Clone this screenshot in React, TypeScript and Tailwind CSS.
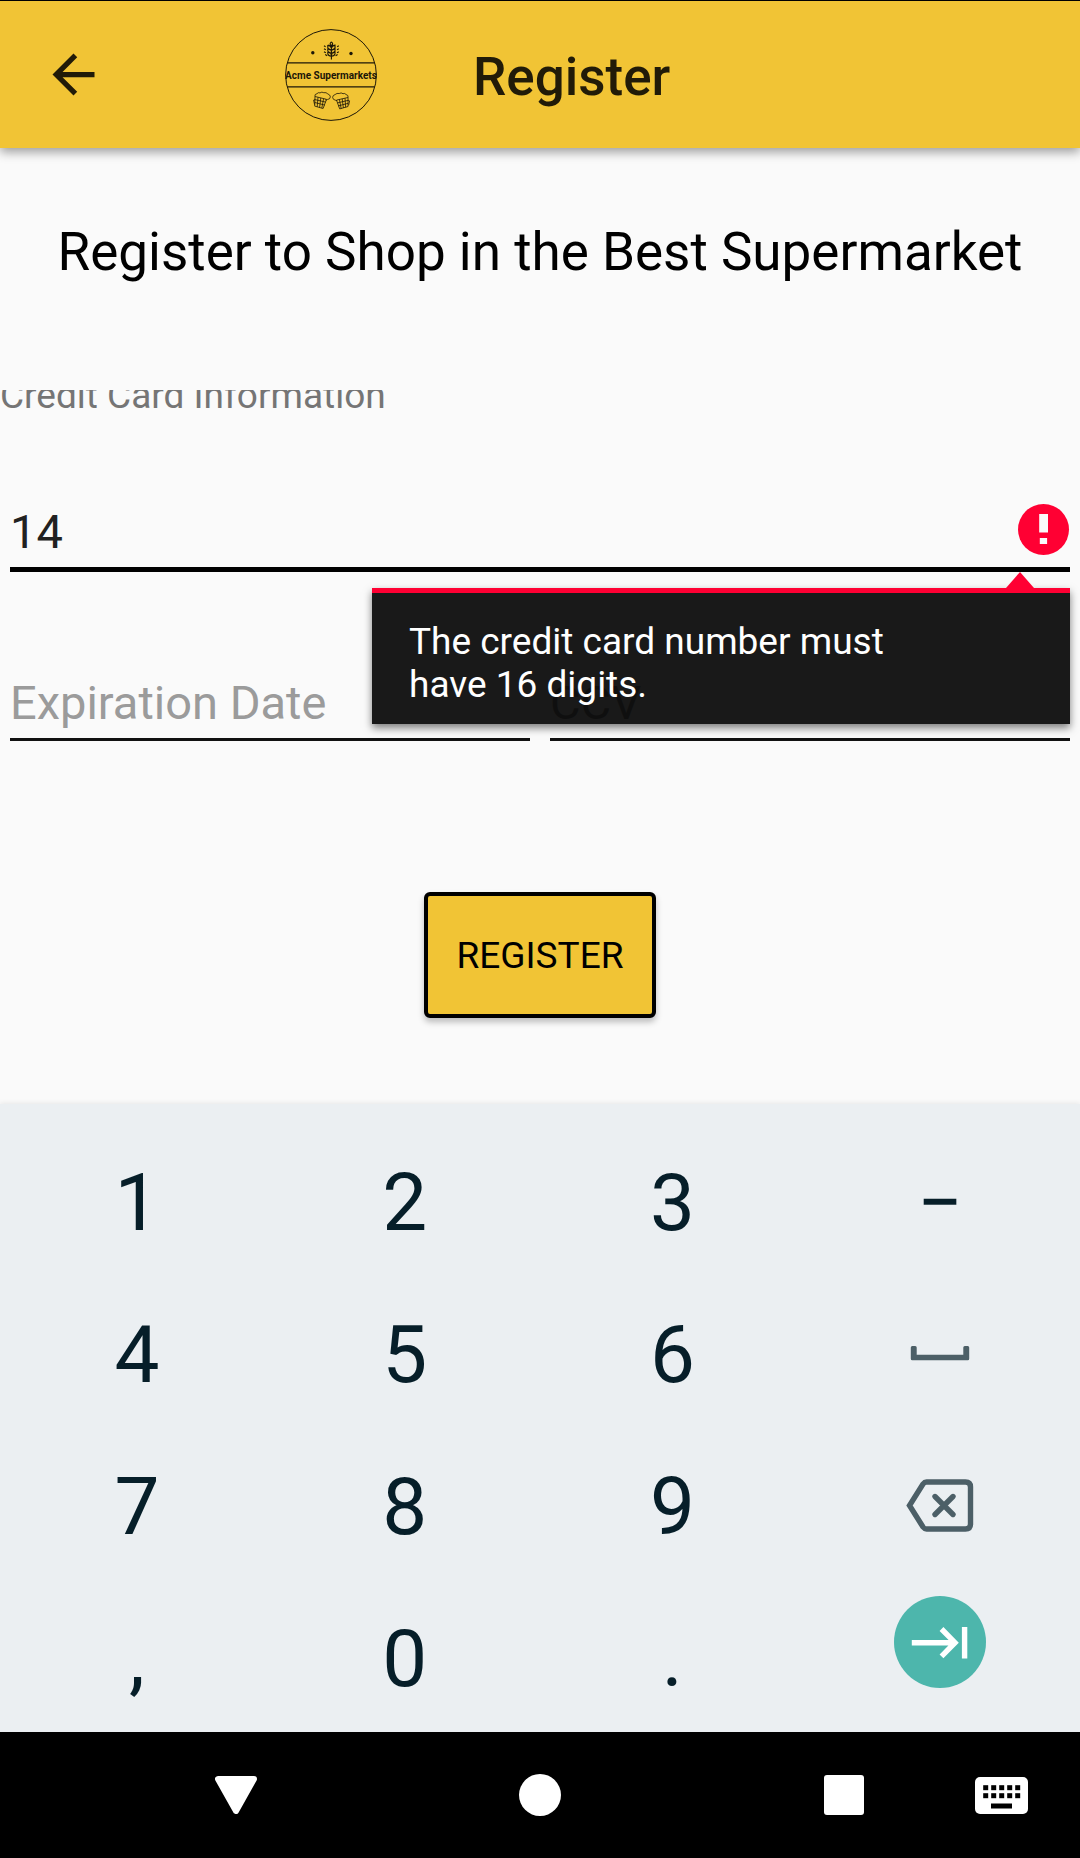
import { useState } from "react";
import type { ReactNode } from "react";
import { MdArrowBack } from "react-icons/md";

function AcmeLogo() {
  return (
    <svg
      className="h-[92px] w-[92px] shrink-0"
      viewBox="10 8.5 92 92"
      role="img"
      aria-label="Acme Supermarkets"
      fill="none"
      stroke="#1c1708"
    >
      <circle cx="56" cy="54.5" r="45.4" strokeWidth="1" />
      <path d="M12.5 42.3h87M12.5 66.4h87" strokeWidth="1.2" />
      <circle cx="37.8" cy="32.3" r="1.7" fill="#1c1708" stroke="none" />
      <circle cx="76" cy="33" r="1.7" fill="#1c1708" stroke="none" />
      {/* wheat ear with two smaller ears beside it */}
      <path
        d="M56.4 24v15M56.4 21.3q-2.6 2.2 0 4.4q2.6-2.2 0-4.4M52.8 24.6v2.6q.4 2 3.6 2.4q3.2-.4 3.6-2.4v-2.6q-3.2.6-3.6 3q-.4-2.4-3.6-3M52.8 28v2.4q.4 2 3.6 2.4q3.2-.4 3.6-2.4V28q-3.2.6-3.6 3q-.4-2.4-3.6-3M52.8 31.4v2q.4 2 3.6 2.4q3.2-.4 3.6-2.4v-2q-3.2.6-3.6 3q-.4-2.4-3.6-3"
        strokeWidth="1.1"
      />
      <path
        d="M49 25.2l1.6 1M49 28.2l1.8 1M49 31.2l1.8 1M50.2 34l2 1.2M63.8 25.2l-1.6 1M63.8 28.2l-1.8 1M63.8 31.2l-1.8 1M62.6 34l-2 1.2"
        strokeWidth="1.1"
      />
      {/* pair of beer mugs */}
      <g strokeWidth="0.8">
        <path d="M40 76l11.5 2.8-3.4 9.2-8.4-2.4zM43 76.8l-.8 9.6M45.8 77.4l-1.2 9.6M48.6 78.2l-1.8 9.4M39.6 79l11 2.6M39.8 82l10 2.6" />
        <path d="M40 79.4l-1.4.2 1 4.6M39.8 76q-.2-2.6 2.2-2.8q1-1.6 3-.8q1.8-1.4 3.8-.2q2.4-.6 4 1.2q2.4.8 2.6 3q-.4 2.6-3 2.6q-1.2 1.2-2 .2" />
        <path d="M73 77l-11.5 2.6 3.2 8.8 8.3-2.4zM70 77.7l.7 9.2M67.2 78.3l1.2 9.2M64.4 79l1.8 9.2M73.4 79.8l-11 2.6M73.2 82.8l-10 2.6" />
        <path d="M73.2 80l1.4.4-1 4.4M73.2 77q.2-2.6-2.2-3q-1-1.6-3-.8q-1.8-1.4-3.8-.2q-2.4-.6-4 1q-2.4.6-2.6 2.8q.4 2.6 2.6 2.8q1.2 1 2 0" />
      </g>
      <text
        x="56"
        y="58"
        textAnchor="middle"
        className="font-['Roboto',sans-serif] text-[10px] font-bold"
        fill="#1c1708"
        stroke="none"
      >
        Acme Supermarkets
      </text>
    </svg>
  );
}

function ErrorIcon() {
  return (
    <svg className="h-[52px] w-[52px] shrink-0" viewBox="0 0 52 52" aria-hidden="true">
      <circle cx="25.5" cy="25.5" r="25.5" fill="#ff0033" />
      <path d="M21.2 10H30v18.600h-8.800zM21.800 34h7.300v6h-7.300z" fill="#fafafa" />
    </svg>
  );
}

function SpaceIcon() {
  return (
    <svg className="h-5 w-[60px]" viewBox="0 0 60 20">
      <path
        d="M2.300 1h2.900q1.500 0 1.500 1.500v7.300h46.600v-7.300q0-1.500 1.500-1.500h2.900q1.500 0 1.500 1.500v11.200q0 1.500-1.500 1.500h-55.400q-1.500 0-1.500-1.500v-11.200q0-1.500 1.500-1.500z"
        fill="#4c5f67"
      />
    </svg>
  );
}

function BackspaceIcon() {
  return (
    <svg
      className="h-14 w-[68px]"
      viewBox="0 0 68 56"
      fill="none"
      stroke="#4c5f67"
      strokeWidth="5.4"
      strokeLinecap="round"
    >
      <path d="M20.500 3H59.500Q64.500 3 64.500 8V45Q64.500 50 59.500 50H20.500Q18.500 50 17 48L3.500 26.500L17 5Q18.500 3 20.500 3Z" />
      <path d="M29 17.500l18 18M47 17.500l-18 18" />
    </svg>
  );
}

function NextIcon() {
  return (
    <svg className="h-[92px] w-[92px]" viewBox="0 0 92 92" fill="none" stroke="#fff" strokeWidth="5.4">
      <path d="M17.800 46.700H60M47.500 33L61 46.700L47.500 60.300M70.600 31V62.600" />
    </svg>
  );
}

function KeyboardIcon() {
  return (
    <svg className="h-[37px] w-[53px]" viewBox="0 0 53 37">
      <rect width="53" height="37" rx="5" fill="#fff" />
      <g fill="#000">
        {[8, 16, 24, 32, 40].map((x) => (
          <g key={x}>
            <rect x={x + 0.2} y="8.2" width="5" height="5" />
            <rect x={x + 0.2} y="16.2" width="5" height="5" />
          </g>
        ))}
        <rect x="16" y="26.5" width="21" height="5" />
      </g>
    </svg>
  );
}

const fieldText =
  "h-14 w-full min-w-0 bg-transparent p-0 text-[47px] leading-[56px] text-[#212121] outline-none placeholder:text-[#9b9b9b] placeholder:opacity-100";

function Key({ label, onPress, children }: { label: string; onPress: () => void; children?: ReactNode }) {
  return (
    <button
      type="button"
      aria-label={label}
      onMouseDown={(e) => e.preventDefault()}
      onClick={onPress}
      className="flex items-start justify-center text-[80px] leading-[152px] text-[#061e29]"
    >
      {children ?? label}
    </button>
  );
}

export default function App() {
  const [card, setCard] = useState("14");
  const type = (s: string) => () => setCard((c) => c + s);
  const showError = card.length !== 16;

  return (
    <div className="flex min-h-screen flex-col bg-[#fafafa] font-['Roboto',sans-serif]">
      <header className="relative flex h-[148px] items-center border-t border-black bg-[#f1c435] text-[#211b08] shadow-[0_4px_10px_rgba(0,0,0,0.38)]">
        <button type="button" aria-label="Back" className="flex w-[147px] shrink-0 justify-center">
          <MdArrowBack size={63} />
        </button>
        <div className="ml-[138px] flex items-center gap-24">
          <AcmeLogo />
          <p className="pt-1 text-[53px] leading-[62px] font-medium">Register</p>
        </div>
      </header>

      <main className="flex flex-1 flex-col">
        <h1 className="px-4 pt-[73px] pb-[107px] text-center text-[53px] leading-[62px] text-black">
          Register to Shop in the Best Supermarket
        </h1>

        <form className="flex flex-col overflow-hidden" onSubmit={(e) => e.preventDefault()}>
          <label htmlFor="card" className="-mt-4 text-[37px] leading-[43px] text-[#757575]">
            Credit Card Information
          </label>

          <div className="relative mx-[10px] mt-[87px] flex border-b-5 border-black pb-[7px]">
            <input
              id="card"
              inputMode="numeric"
              value={card}
              onChange={(e) => setCard(e.target.value)}
              aria-invalid={showError}
              aria-describedby="card-error"
              className={fieldText}
            />
            {showError && (
              <>
                <ErrorIcon />
                <div
                  id="card-error"
                  role="alert"
                  className="absolute top-full right-0 z-10 mt-[21px] w-[698px] max-w-full border-t-5 border-[#ff0033] bg-black/90 bg-clip-padding pt-[27px] pr-[120px] pb-[18px] pl-[37px] text-[37px] leading-[43px] text-white shadow-[0_4px_8px_rgba(0,0,0,0.5)]"
                >
                  <svg
                    className="absolute right-9 bottom-full mb-[5px] h-4 w-7"
                    viewBox="0 0 28 16"
                    aria-hidden="true"
                  >
                    <path d="M0 16L14 0l14 16z" fill="#ff0033" />
                  </svg>
                  The credit card number must have 16 digits.
                </div>
              </>
            )}
          </div>

          <div className="mx-[10px] mt-[103px] grid grid-cols-2 gap-5">
            <div className="border-b-3 border-[#111] pb-[7px]">
              <input aria-label="Expiration Date" placeholder="Expiration Date" className={fieldText} />
            </div>
            <div className="border-b-3 border-[#111] pb-[7px]">
              <input aria-label="CCV" placeholder="CCV" className={fieldText} />
            </div>
          </div>

          <div className="flex justify-center pt-[151px] pb-[86px]">
            <button
              type="submit"
              className="h-[126px] w-[232px] rounded-md border-4 border-black bg-[#f1c435] text-[37px] leading-[43px] text-black shadow-[0_4px_6px_rgba(0,0,0,0.25)]"
            >
              REGISTER
            </button>
          </div>
        </form>
      </main>

      <section
        aria-label="Keyboard"
        className="relative grid grid-cols-4 grid-rows-[152px_152px_152px_149px] bg-[#ebeff2] pt-[23px] pr-[6px] pl-[3px] shadow-[0_-1px_5px_rgba(0,0,0,0.08)]"
      >
        <Key label="1" onPress={type("1")} />
        <Key label="2" onPress={type("2")} />
        <Key label="3" onPress={type("3")} />
        <Key label="−" onPress={type("-")} />
        <Key label="4" onPress={type("4")} />
        <Key label="5" onPress={type("5")} />
        <Key label="6" onPress={type("6")} />
        <Key label="Space" onPress={type(" ")}>
          <span className="flex h-full items-center">
            <SpaceIcon />
          </span>
        </Key>
        <Key label="7" onPress={type("7")} />
        <Key label="8" onPress={type("8")} />
        <Key label="9" onPress={type("9")} />
        <Key label="Backspace" onPress={() => setCard((c) => c.slice(0, -1))}>
          <span className="flex h-full items-center">
            <BackspaceIcon />
          </span>
        </Key>
        <Key label="," onPress={type(",")} />
        <Key label="0" onPress={type("0")} />
        <Key label="." onPress={type(".")} />
        <Key label="Next" onPress={() => undefined}>
          <span className="mt-[13px] rounded-full bg-[#4db6ac]">
            <NextIcon />
          </span>
        </Key>
      </section>

      <nav aria-label="System" className="flex h-[126px] bg-black pr-[26px]">
        <div className="flex flex-1 justify-between pr-10 pl-[171px]">
          <button type="button" aria-label="Back" className="flex w-[130px] items-center justify-center">
            <svg className="h-[38px] w-[42px]" viewBox="0 0 42 38">
              <path d="M3 3H39L21 35Z" fill="#fff" stroke="#fff" strokeWidth="6" strokeLinejoin="round" />
            </svg>
          </button>
          <button type="button" aria-label="Home" className="flex w-[130px] items-center justify-center">
            <span className="h-[42px] w-[42px] rounded-full bg-white" />
          </button>
          <button type="button" aria-label="Overview" className="flex w-[130px] items-center justify-center">
            <span className="h-10 w-10 rounded-[3px] bg-white" />
          </button>
        </div>
        <button type="button" aria-label="Switch keyboard" className="flex w-[105px] items-center justify-center">
          <KeyboardIcon />
        </button>
      </nav>
    </div>
  );
}
